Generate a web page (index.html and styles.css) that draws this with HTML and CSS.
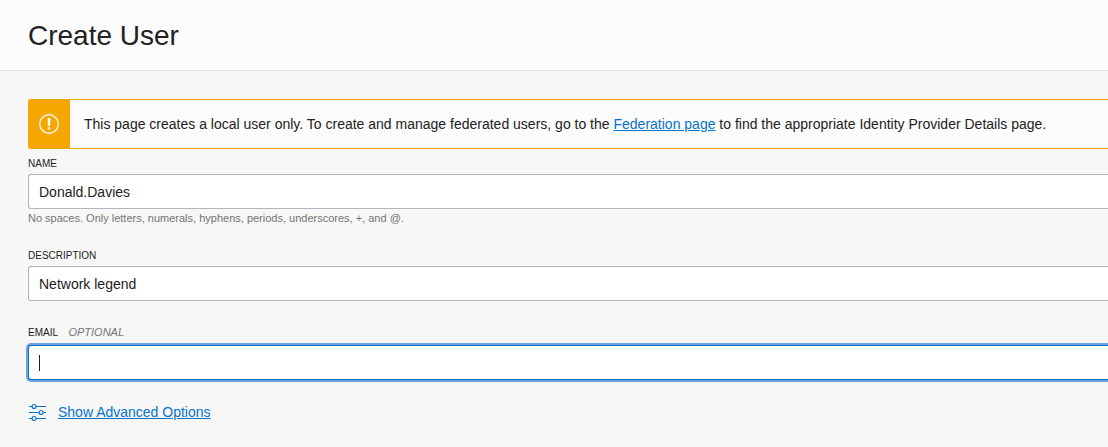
FILE: index.html
```html
<!DOCTYPE html>
<html lang="en">
<head>
<meta charset="utf-8">
<title>Create User</title>
<link rel="stylesheet" href="styles.css">
</head>
<body>
<header class="header">
  <h1 class="title">Create User</h1>
</header>
<main class="content">
  <div class="notice">
    <div class="notice-icon">
      <svg width="20" height="20" viewBox="0 0 20 20" aria-hidden="true">
        <circle cx="10" cy="10" r="9.3" fill="none" stroke="#fff" stroke-width="1.3"/>
        <path d="M8.6 4h2.8l-.3 8H8.9zM8.8 13.2h2.4v2.3H8.8z" fill="#fff"/>
      </svg>
    </div>
    <p class="notice-text">This page creates a local user only. To create and manage federated users, go to the <a class="link" href="#">Federation page</a> to find the appropriate Identity Provider Details page.</p>
  </div>
  <form class="form">
    <div class="field">
      <label class="label" for="name">NAME</label>
      <input class="input" id="name" type="text" value="Donald.Davies" aria-describedby="name-help">
      <p class="help" id="name-help">No spaces. Only letters, numerals, hyphens, periods, underscores, +, and @.</p>
    </div>
    <div class="field">
      <label class="label" for="description">DESCRIPTION</label>
      <input class="input" id="description" type="text" value="Network legend">
    </div>
    <div class="field field-active">
      <label class="label" for="email">EMAIL <em class="optional">OPTIONAL</em></label>
      <input class="input input-active" id="email" type="email">
    </div>
    <div class="advanced">
      <svg width="18" height="18" viewBox="0 0 18 18" fill="none" stroke="#0572ce" stroke-width="1.1" aria-hidden="true">
        <path d="M1 3.5h3M8.2 3.5H18M1 9.5h10M15.2 9.5H18M1 15.5h3M8.2 15.5H18"/>
        <circle cx="6.1" cy="3.5" r="2"/>
        <circle cx="13.1" cy="9.5" r="2"/>
        <circle cx="6.1" cy="15.5" r="2"/>
      </svg>
      <a class="link" href="#">Show Advanced Options</a>
    </div>
  </form>
</main>
</body>
</html>
```
FILE: styles.css
```css
* {
  box-sizing: border-box;
}

body {
  margin: 0;
  min-height: 100vh;
  background: #f7f7f7;
  color: #222;
  font-family: "Liberation Sans", Arial, sans-serif;
  font-size: 14px;
  line-height: 20px;
}

.header {
  padding: 20px 28px 18px;
  background: #fcfcfc;
  border-bottom: 1px solid #e4e4e4;
}

.title {
  margin: 0;
  font-size: 28px;
  font-weight: 400;
  line-height: 32px;
}

.content {
  padding: 28px 0 24px 28px;
}

.notice {
  display: flex;
  min-height: 50px;
  margin-bottom: 7px;
  background: #fcfcfc;
  border: 1px solid #f5a700;
  border-right: 0;
  border-radius: 3px 0 0 3px;
}

.notice-icon {
  display: flex;
  align-items: center;
  justify-content: center;
  width: 41px;
  padding-right: 1px;
  flex-shrink: 0;
  background: #f5a700;
}

.notice-text {
  margin: 0;
  padding: 14px;
}

.link {
  color: #0572ce;
  text-decoration: underline;
}

.field {
  display: flex;
  flex-direction: column;
  gap: 2px;
  margin-bottom: 23px;
}

.field:first-child {
  margin-bottom: 22px;
}

.label {
  font-size: 10px;
  line-height: 16px;
}

.optional {
  margin-left: 8px;
  color: #757575;
  font-size: 11px;
}

.input {
  width: 100%;
  height: 35px;
  padding: 0 10px;
  background: #fff;
  border: 1px solid #aeb6c0;
  border-right: 0;
  border-radius: 3px 0 0 3px;
  color: #222;
  font: inherit;
}

.help {
  margin: -1px 0 0;
  color: #757575;
  font-size: 11px;
  line-height: 16px;
}

.field-active {
  gap: 4px;
  margin-bottom: 22px;
}

/* Focused field: blue ring with a text cursor at the start */
.input-active {
  background: linear-gradient(#222, #222) 10px center / 1px 16px no-repeat #fff;
  border-color: #0572ce;
  outline: none;
  box-shadow: 0 0 0 2px #6ea3e0;
}

.advanced {
  display: flex;
  align-items: center;
  gap: 12px;
}
```
